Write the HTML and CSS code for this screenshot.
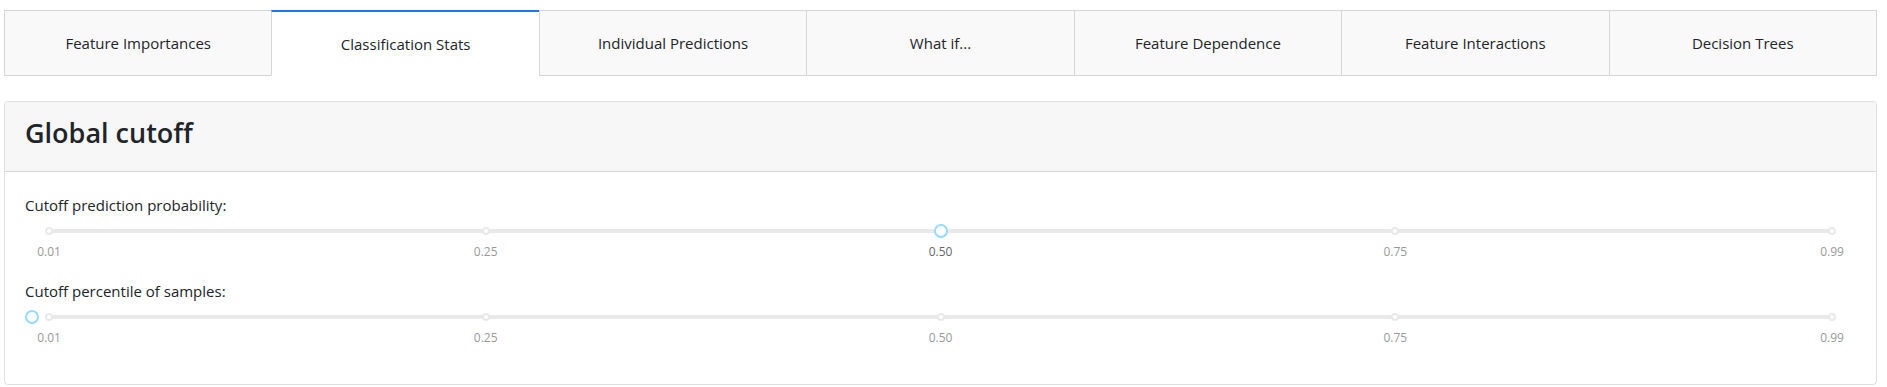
FILE: index.html
```html
<!DOCTYPE html>
<html lang="en">
<head>
    <meta charset="UTF-8">
    <meta name="viewport" content="width=device-width, initial-scale=1.0">
    <title>Classification Stats</title>
    <link rel="stylesheet" href="styles.css">
</head>
<body>

    <div class="page">
        <div class="tabs">
            <div class="tab">Feature Importances</div>
            <div class="tab selected">Classification Stats</div>
            <div class="tab">Individual Predictions</div>
            <div class="tab">What if...</div>
            <div class="tab">Feature Dependence</div>
            <div class="tab">Feature Interactions</div>
            <div class="tab">Decision Trees</div>
        </div>

        <div class="card">
            <div class="card-header">
                <h3>Global cutoff</h3>
            </div>
            <div class="card-body">
                <label class="slider-label">Cutoff prediction probability:</label>
                <div class="slider">
                    <div class="slider-rail">
                        <span class="dot" style="left: 0%"></span>
                        <span class="dot" style="left: 24.49%"></span>
                        <span class="dot" style="left: 50%"></span>
                        <span class="dot" style="left: 75.51%"></span>
                        <span class="dot" style="left: 100%"></span>
                        <span class="handle" style="left: 50%"></span>
                    </div>
                    <div class="slider-marks">
                        <span class="mark" style="left: 0%">0.01</span>
                        <span class="mark" style="left: 24.49%">0.25</span>
                        <span class="mark active" style="left: 50%">0.50</span>
                        <span class="mark" style="left: 75.51%">0.75</span>
                        <span class="mark" style="left: 100%">0.99</span>
                    </div>
                </div>

                <label class="slider-label">Cutoff percentile of samples:</label>
                <div class="slider">
                    <div class="slider-rail">
                        <span class="dot" style="left: 0%"></span>
                        <span class="dot" style="left: 24.49%"></span>
                        <span class="dot" style="left: 50%"></span>
                        <span class="dot" style="left: 75.51%"></span>
                        <span class="dot" style="left: 100%"></span>
                        <span class="handle" style="left: -0.95%"></span>
                    </div>
                    <div class="slider-marks">
                        <span class="mark" style="left: 0%">0.01</span>
                        <span class="mark" style="left: 24.49%">0.25</span>
                        <span class="mark" style="left: 50%">0.50</span>
                        <span class="mark" style="left: 75.51%">0.75</span>
                        <span class="mark" style="left: 100%">0.99</span>
                    </div>
                </div>
            </div>
        </div>
    </div>

</body>
</html>
```
FILE: styles.css
```css
body {
    font-family: 'Open Sans', 'Noto Sans', sans-serif;
    font-size: 15px;
    margin: 0;
    padding: 0;
    background-color: #fff;
    color: #212529;
}
.page {
    padding: 10px 10px 0 4px;
}
.tabs {
    display: flex;
}
.tab {
    flex: 1;
    height: 64px;
    display: flex;
    align-items: center;
    justify-content: center;
    background-color: #f9f9f9;
    border: 1px solid #d6d6d6;
    border-right: none;
    color: #212529;
}
.tab:last-child {
    border-right: 1px solid #d6d6d6;
}
.tab.selected {
    background-color: #fff;
    border-top: 2px solid #1975fa;
    border-bottom: 1px solid transparent;
    height: 63px;
}
.card {
    margin-top: 25px;
    border: 1px solid rgba(0, 0, 0, 0.125);
    border-radius: 4px;
    overflow: hidden;
}
.card-header {
    background-color: #f7f7f7;
    border-bottom: 1px solid rgba(0, 0, 0, 0.125);
    padding: 14px 20px 22px;
}
.card-header h3 {
    margin: 0;
    font-size: 27px;
    font-weight: 600;
    line-height: 33px;
}
.card-body {
    padding: 21px 20px 19px;
}
.slider-label {
    display: block;
    line-height: 24px;
}
.slider {
    padding: 12px 24px 18px;
}
.slider-rail {
    position: relative;
    height: 4px;
    border-radius: 6px;
    background-color: #e9e9e9;
}
.dot {
    position: absolute;
    top: -2px;
    width: 8px;
    height: 8px;
    margin-left: -4px;
    box-sizing: border-box;
    border: 2px solid #e9e9e9;
    border-radius: 50%;
    background-color: #fff;
}
.handle {
    position: absolute;
    top: -5px;
    width: 14px;
    height: 14px;
    margin-left: -7px;
    box-sizing: border-box;
    border: 2px solid #96dbfa;
    border-radius: 50%;
    background-color: #fff;
}
.slider-marks {
    position: relative;
    height: 18px;
    margin-top: 10px;
}
.mark {
    position: absolute;
    top: 0;
    transform: translateX(-50%);
    font-size: 12px;
    line-height: 18px;
    color: #999;
}
.mark.active {
    color: #666;
}
```
